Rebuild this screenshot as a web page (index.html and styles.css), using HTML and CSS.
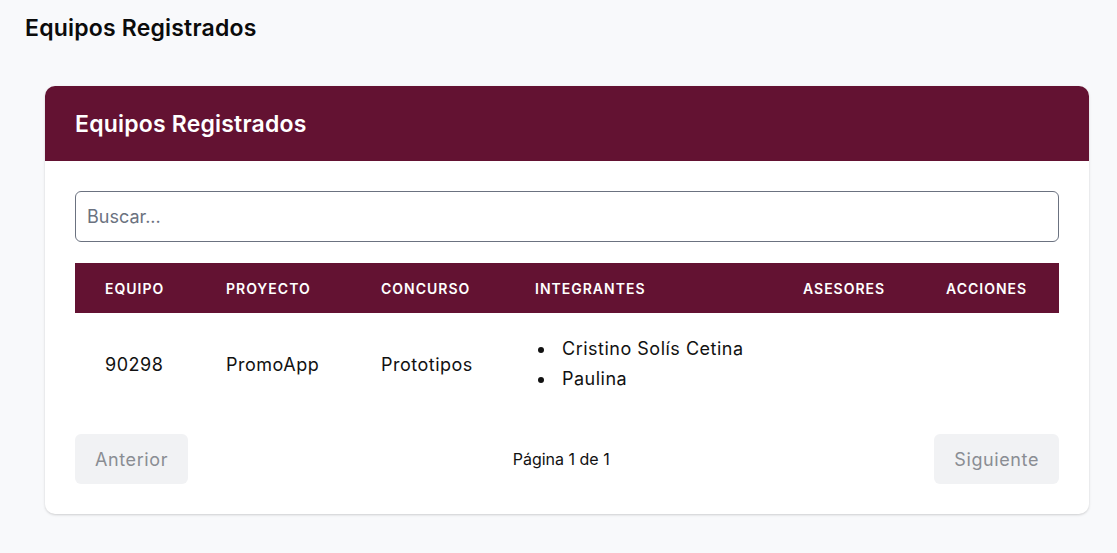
FILE: index.html
```html
<!DOCTYPE html>
<html lang="es">
<head>
<meta charset="utf-8">
<title>Equipos Registrados</title>
<link rel="stylesheet" href="styles.css">
</head>
<body>
<h1 class="page-title">Equipos Registrados</h1>
<div class="card">
  <div class="card-header">
    <h2 class="card-title">Equipos Registrados</h2>
  </div>
  <div class="card-body">
    <input class="search" type="text" placeholder="Buscar...">
    <table class="teams">
      <thead>
        <tr>
          <th class="c-equipo">Equipo</th>
          <th class="c-proyecto">Proyecto</th>
          <th class="c-concurso">Concurso</th>
          <th class="c-integrantes">Integrantes</th>
          <th class="c-asesores">Asesores</th>
          <th class="c-acciones">Acciones</th>
        </tr>
      </thead>
      <tbody>
        <tr>
          <td>90298</td>
          <td>PromoApp</td>
          <td>Prototipos</td>
          <td>
            <ul class="members">
              <li>Cristino Solís Cetina</li>
              <li>Paulina</li>
            </ul>
          </td>
          <td></td>
          <td></td>
        </tr>
      </tbody>
    </table>
    <div class="pager">
      <button class="pager-btn" disabled>Anterior</button>
      <span class="pager-info">Página 1 de 1</span>
      <button class="pager-btn" disabled>Siguiente</button>
    </div>
  </div>
</div>
</body>
</html>
```
FILE: styles.css
```css
* { box-sizing: border-box; }
html, body { margin: 0; padding: 0; }
body {
  background: #f8f9fb;
  font-family: Inter, "Noto Sans", sans-serif;
  color: #111;
  padding: 12px 28px 39px 25px;
}
.page-title {
  margin: 0 0 42px 0;
  font-size: 23px;
  line-height: 32px;
  font-weight: 600;
  letter-spacing: 0.2px;
  color: #0b0b0b;
}
.card {
  margin-left: 20px;
  background: #fff;
  border-radius: 10px;
  box-shadow: 0 1px 3px rgba(0,0,0,0.12), 0 1px 2px rgba(0,0,0,0.06);
  overflow: hidden;
}
.card-header {
  background: #631232;
  height: 75px;
  display: flex;
  align-items: center;
  padding: 0 30px;
}
.card-title {
  margin: 0;
  color: #fff;
  font-size: 23px;
  font-weight: 600;
  letter-spacing: 0.2px;
}
.card-body {
  padding: 30px;
}
.search {
  display: block;
  width: 100%;
  height: 51px;
  border: 1px solid #6b7280;
  border-radius: 6px;
  padding: 0 11px;
  font-family: inherit;
  font-size: 18px;
  color: #111;
  background: #fff;
  outline: none;
}
.search::placeholder { color: #6b7280; }
.teams {
  width: 100%;
  margin-top: 21px;
  border-collapse: collapse;
  table-layout: fixed;
}
.teams th {
  background: #631232;
  color: #fff;
  height: 50px;
  text-align: left;
  text-transform: uppercase;
  font-size: 14px;
  font-weight: 600;
  letter-spacing: 1px;
  padding: 0 30px;
}
.c-equipo { width: 121px; }
.c-proyecto { width: 155px; }
.c-concurso { width: 154px; }
.c-integrantes { width: 268px; }
.c-asesores { width: 143px; }
.c-acciones { width: 143px; }
.teams td {
  padding: 21px 30px;
  font-size: 18px;
  letter-spacing: 0.5px;
  vertical-align: middle;
  color: #111;
  white-space: nowrap;
}
.members {
  margin: 0;
  padding: 0;
  list-style: none;
}
.members li {
  line-height: 30px;
  display: flex;
  align-items: center;
  white-space: nowrap;
}
.members li::before {
  content: "";
  flex: none;
  width: 6px;
  height: 6px;
  border-radius: 50%;
  background: #111;
  margin: 1px 18px 0 3px;
}
.pager {
  margin-top: 19px;
  display: flex;
  justify-content: space-between;
  align-items: center;
}
.pager-btn {
  height: 50px;
  padding: 0 20px;
  border: none;
  border-radius: 6px;
  background: #f1f2f4;
  color: #8a8d93;
  font-family: inherit;
  font-size: 18px;
  letter-spacing: 0.6px;
}
.pager-info {
  font-size: 16px;
  color: #111;
}
```
